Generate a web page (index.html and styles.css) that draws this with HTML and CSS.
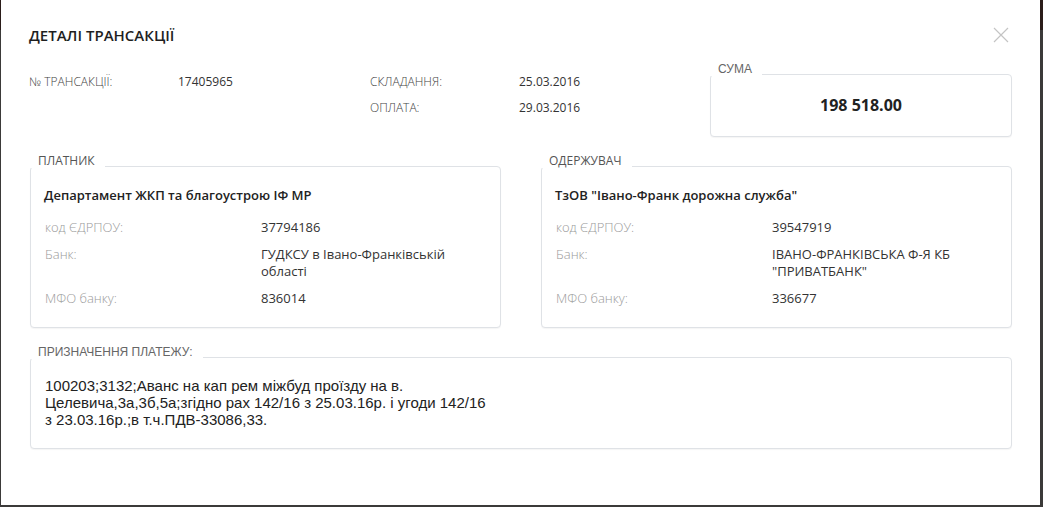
FILE: index.html
```html
<!DOCTYPE html>
<html lang="uk">
<head>
<meta charset="utf-8">
<title>Деталі трансакції</title>
<link rel="stylesheet" href="styles.css">
</head>
<body>
<div class="modal">
  <div class="header">
    <h1 class="title">ДЕТАЛІ ТРАНСАКЦІЇ</h1>
    <button class="close" aria-label="Закрити">
      <svg width="16" height="16" viewBox="0 0 16 16"><path d="M1 1 L15 15 M15 1 L1 15" stroke="#c4c4c4" stroke-width="1.2" fill="none"/></svg>
    </button>
  </div>

  <div class="top">
    <div class="info">
      <span class="k">№ ТРАНСАКЦІЇ:</span><span class="v">17405965</span>
      <span class="k">СКЛАДАННЯ:</span><span class="v">25.03.2016</span>
      <span></span><span></span>
      <span class="k">ОПЛАТА:</span><span class="v">29.03.2016</span>
    </div>
    <div class="group sum">
      <div class="legend legend-arial">СУМА</div>
      <div class="sum-value">198 518.00</div>
    </div>
  </div>

  <div class="parties">
    <div class="group party">
      <div class="legend">ПЛАТНИК</div>
      <div class="party-name">Департамент ЖКП та благоустрою ІФ МР</div>
      <div class="rows">
        <span class="pk">код ЄДРПОУ:</span><span class="pv">37794186</span>
        <span class="pk">Банк:</span><span class="pv">ГУДКСУ в Івано-Франківській<br>області</span>
        <span class="pk">МФО банку:</span><span class="pv">836014</span>
      </div>
    </div>
    <div class="group party">
      <div class="legend">ОДЕРЖУВАЧ</div>
      <div class="party-name">ТзОВ "Івано-Франк дорожна служба"</div>
      <div class="rows">
        <span class="pk">код ЄДРПОУ:</span><span class="pv">39547919</span>
        <span class="pk">Банк:</span><span class="pv">ІВАНО-ФРАНКІВСЬКА Ф-Я КБ<br>"ПРИВАТБАНК"</span>
        <span class="pk">МФО банку:</span><span class="pv">336677</span>
      </div>
    </div>
  </div>

  <div class="group purpose">
    <div class="legend legend-arial">ПРИЗНАЧЕННЯ ПЛАТЕЖУ:</div>
    <p class="purpose-text">100203;3132;Аванс на кап рем міжбуд проїзду на в. Целевича,3а,3б,5а;згідно рах 142/16 з 25.03.16р. і угоди 142/16 з 23.03.16р.;в т.ч.ПДВ-33086,33.</p>
  </div>
</div>
</body>
</html>
```

FILE: styles.css
```css
* { box-sizing: border-box; }

html, body {
  margin: 0;
  padding: 0;
  height: 507px;
  overflow: hidden;
}

body {
  background: linear-gradient(to bottom, #2a1c19 0, #2a1c19 30px, #3b3a39 30px, #3b3a39 100%);
  font-family: "Open Sans", "Liberation Sans", sans-serif;
  color: #333;
}

.modal {
  margin-left: 1px;
  width: 1039px;
  height: 505px;
  background: #fff;
  padding: 25px 28px 0 29px;
}

.header {
  display: flex;
  justify-content: space-between;
  align-items: center;
  height: 20px;
}

.title {
  margin: 0 0 0 -1px;
  font-size: 15px;
  line-height: 20px;
  font-weight: 600;
  color: #1f1f1f;
}

.close {
  border: 0;
  background: none;
  padding: 0;
  width: 16px;
  height: 16px;
  margin-right: 3px;
  display: block;
}
.close svg { display: block; }

.top {
  display: flex;
  justify-content: space-between;
  align-items: flex-start;
  margin-top: 29px;
}

.info {
  display: grid;
  grid-template-columns: 149px 192px 149px auto;
  row-gap: 10px;
  font-size: 12px;
  line-height: 16px;
  margin-left: -1px;
}
.info .k { color: #444; font-weight: 300; }
.info .v { color: #333; }

.group {
  border: 1px solid #dfe2e6;
  border-radius: 4px;
  box-shadow: 0 1px 1px rgba(0, 0, 0, 0.04);
  background: #fff;
}

.legend {
  width: fit-content;
  margin: -12px 0 0 -1px;
  height: 13px;
  padding: 0 10px 0 8px;
  background: #fff;
  font-size: 12px;
  line-height: 12px;
  color: #555;
}
.legend-arial {
  font-family: "Liberation Sans", Arial, sans-serif;
  font-size: 12px;
  color: #666;
}

.sum {
  width: 302px;
  padding: 0 0 20px;
}
.sum-value {
  margin-top: 18px;
  text-align: center;
  font-size: 16px;
  line-height: 22px;
  font-weight: 700;
  color: #222;
}

.parties {
  display: flex;
  gap: 40px;
  margin-top: 29px;
}

.party {
  flex: 1;
  padding: 0 14px 20px 14px;
}
.party .legend { margin-left: -15px; }

.party-name {
  margin-top: 19px;
  margin-left: -1px;
  font-size: 13px;
  line-height: 17px;
  font-weight: 600;
  color: #222;
}

.rows {
  display: grid;
  grid-template-columns: 216px 1fr;
  row-gap: 10px;
  margin-top: 15px;
  font-size: 13px;
  line-height: 17px;
}
.pk { color: #9a9a9a; font-weight: 300; }
.pv { color: #333; }

.purpose {
  margin-top: 29px;
  padding: 0 14px 20px 14px;
}
.purpose .legend { margin-left: -15px; }

.purpose-text {
  margin: 18px 0 0;
  max-width: 447px;
  font-family: "Liberation Sans", Arial, sans-serif;
  font-size: 15px;
  line-height: 17px;
  color: #222;
}
```
